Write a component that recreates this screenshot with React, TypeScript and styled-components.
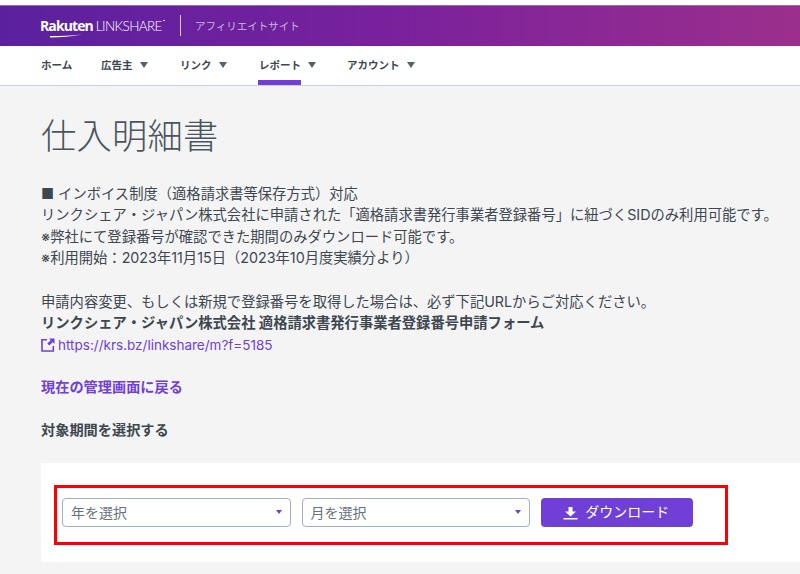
import styled, { createGlobalStyle } from "styled-components";

const GlobalStyle = createGlobalStyle`
    html, body {
        margin: 0;
        padding: 0;
        background-color: #f4f4f4;
    }
    body {
        font-family: "Inter", "Noto Sans CJK JP", sans-serif;
        color: #3d4750;
        overflow: hidden;
    }
`;

const Page = styled.div`
    width: 800px;
    height: 574px;
    overflow: hidden;
    box-sizing: border-box;
    background-color: #f4f4f4;
`;

const TopStrip = styled.div`
    height: 5px;
    background-color: #fff;
`;

// purple gradient bar with the logo
const Header = styled.header`
    height: 41px;
    display: flex;
    align-items: center;
    padding: 0 0 1px 40px;
    background: linear-gradient(90deg, #5a219f 0%, #7a219c 50%, #9c2f8c 100%);
    border-top: 1px solid #9a6cb8;
    box-sizing: border-box;
`;

const Logo = styled.div`
    display: flex;
    align-items: baseline;
    position: relative;
    color: #fff;
    width: 125px;
`;

const LogoBrand = styled.span`
    font-family: "Open Sans", sans-serif;
    font-size: 14px;
    font-weight: 700;
    letter-spacing: -0.9px;
`;

const LogoProduct = styled.span`
    font-family: "Lato", sans-serif;
    font-size: 13.5px;
    font-weight: 300;
    letter-spacing: -0.6px;
    margin-left: 3px;
`;

const LogoMark = styled.span`
    width: 4px;
    height: 1px;
    margin-left: 1px;
    align-self: flex-start;
    margin-top: 4px;
    background-color: #e4d3ec;
`;

const LogoSwoosh = styled.svg`
    position: absolute;
    left: 10px;
    bottom: -3px;
`;

const HeaderDivider = styled.div`
    width: 1px;
    height: 21px;
    margin-left: 15px;
    background-color: #d9c6e4;
`;

const SiteLabel = styled.span`
    margin-left: 14px;
    font-size: 10.5px;
    color: #cdb7dd;
`;

const Nav = styled.nav`
    height: 40px;
    display: flex;
    padding-left: 41px;
    background-color: #fff;
    border-bottom: 1px solid #cbd2dc;
    box-sizing: border-box;
`;

const NavItem = styled.a<{ $active?: boolean; $width: number }>`
    width: ${props => props.$width}px;
    height: 39px;
    padding-bottom: 2px;
    display: flex;
    align-items: center;
    position: relative;
    box-sizing: border-box;
    font-size: 10.5px;
    font-weight: 700;
    color: #3d4750;

    &::after {
        content: "";
        display: ${props => (props.$active ? "block" : "none")};
        position: absolute;
        left: -1px;
        bottom: 0;
        width: 43px;
        height: 5px;
        background-color: #7040d6;
    }
`;

const NavCaret = styled.span`
    margin-left: 7px;
    width: 0;
    height: 0;
    border-left: 4px solid transparent;
    border-right: 4px solid transparent;
    border-top: 6px solid #56616b;
`;

const Content = styled.main`
    padding: 29px 0 0 41px;
`;

const Title = styled.h1`
    margin: 0 0 24px;
    height: 44px;
    font-size: 35.3px;
    line-height: 44px;
    font-weight: 300;
    letter-spacing: 0.2px;
    color: #4b555e;
`;

const Notice = styled.div`
    font-size: 14.3px;
    line-height: 21.3px;
    color: #3d4750;
    white-space: nowrap;
`;

const NoticeGap = styled.div`
    height: 23px;
`;

const UrlLink = styled.a`
    display: flex;
    align-items: center;
    gap: 3px;
    height: 22px;
    font-size: 13.5px;
    color: #7040d6;
`;

const BackLink = styled.a`
    display: block;
    margin-top: 21px;
    font-size: 14.2px;
    line-height: 20px;
    font-weight: 700;
    color: #7040d6;
`;

const SectionLabel = styled.div`
    margin-top: 23px;
    font-size: 14.2px;
    line-height: 20px;
    font-weight: 700;
    color: #3d4750;
`;

const Panel = styled.section`
    margin-top: 23px;
    height: 99px;
    padding: 22px 0 0 13px;
    box-sizing: border-box;
    background-color: #fff;
`;

// red frame marked on the screenshot around the form
const Highlight = styled.div`
    width: 674px;
    height: 60px;
    padding: 0 0 5px 5px;
    display: flex;
    align-items: center;
    gap: 11px;
    box-sizing: border-box;
    border: 3px solid #ff0000;
`;

const SelectBox = styled.div`
    width: 228.5px;
    height: 29px;
    padding: 0 8px 1px;
    display: flex;
    align-items: center;
    justify-content: space-between;
    box-sizing: border-box;
    border: 1px solid #9fb0c0;
    border-radius: 4px;
    background-color: #fff;
    font-size: 14px;
    color: #66727d;
`;

const SelectCaret = styled.span`
    width: 0;
    height: 0;
    border-left: 3.5px solid transparent;
    border-right: 3.5px solid transparent;
    border-top: 4px solid #7040d6;
`;

const DownloadButton = styled.button`
    width: 151.5px;
    height: 29px;
    display: flex;
    align-items: center;
    justify-content: center;
    gap: 7px;
    border: none;
    border-radius: 4px;
    background-color: #7040d6;
    color: #fff;
    font-family: inherit;
    font-size: 14px;
    padding: 0 0 2px 1px;

    svg {
        margin: 4px 0 0 -2px;
    }
`;

const navItems = [
    { label: "ホーム", width: 60 },
    { label: "広告主", width: 79, caret: true },
    { label: "リンク", width: 79, caret: true },
    { label: "レポート", width: 88, caret: true, active: true },
    { label: "アカウント", width: 90, caret: true },
];

export default function App() {
    return (
        <>
            <GlobalStyle />
            <Page>
                <TopStrip />
                <Header>
                    <Logo>
                        <LogoBrand>Rakuten</LogoBrand>
                        <LogoProduct>LINKSHARE</LogoProduct>
                        <LogoMark />
                        <LogoSwoosh width="32" height="4" viewBox="0 0 32 4">
                            <path d="M0 3.5 C10 3.5 22 2.5 32 0.5 C22 1.5 10 2 0 2 Z" fill="#fff" />
                        </LogoSwoosh>
                    </Logo>
                    <HeaderDivider />
                    <SiteLabel>アフィリエイトサイト</SiteLabel>
                </Header>
                <Nav>
                    {navItems.map(item => (
                        <NavItem key={item.label} $width={item.width} $active={item.active}>
                            {item.label}
                            {item.caret && <NavCaret />}
                        </NavItem>
                    ))}
                </Nav>
                <Content>
                    <Title>仕入明細書</Title>
                    <Notice>
                        ■ インボイス制度（適格請求書等保存方式）対応
                        <br />
                        リンクシェア・ジャパン株式会社に申請された「適格請求書発行事業者登録番号」に紐づくSIDのみ利用可能です。
                        <br />
                        ※弊社にて登録番号が確認できた期間のみダウンロード可能です。
                        <br />
                        ※利用開始：2023年11月15日（2023年10月度実績分より）
                    </Notice>
                    <NoticeGap />
                    <Notice>
                        申請内容変更、もしくは新規で登録番号を取得した場合は、必ず下記URLからご対応ください。
                        <br />
                        <strong>リンクシェア・ジャパン株式会社 適格請求書発行事業者登録番号申請フォーム</strong>
                    </Notice>
                    <UrlLink>
                        <svg width="14" height="14" viewBox="0 0 14 14">
                            <path d="M6 1.7H1v11.3h11.3V8" fill="none" stroke="#7040d6" strokeWidth="1.6" />
                            <path d="M8 0.5h5.5V6l-1.8-1.8-3.4 3.4-2-2 3.4-3.4z" fill="#7040d6" />
                        </svg>
                        https://krs.bz/linkshare/m?f=5185
                    </UrlLink>
                    <BackLink>現在の管理画面に戻る</BackLink>
                    <SectionLabel>対象期間を選択する</SectionLabel>
                    <Panel>
                        <Highlight>
                            <SelectBox>
                                年を選択
                                <SelectCaret />
                            </SelectBox>
                            <SelectBox>
                                月を選択
                                <SelectCaret />
                            </SelectBox>
                            <DownloadButton>
                                <svg width="15" height="14" viewBox="0 0 15 14">
                                    <path d="M5.5 1h4v4.5H13l-5.5 5-5.5-5h3.5z" fill="#fff" />
                                    <rect x="0.5" y="12" width="14" height="1.5" fill="#fff" />
                                </svg>
                                ダウンロード
                            </DownloadButton>
                        </Highlight>
                    </Panel>
                </Content>
            </Page>
        </>
    );
}
